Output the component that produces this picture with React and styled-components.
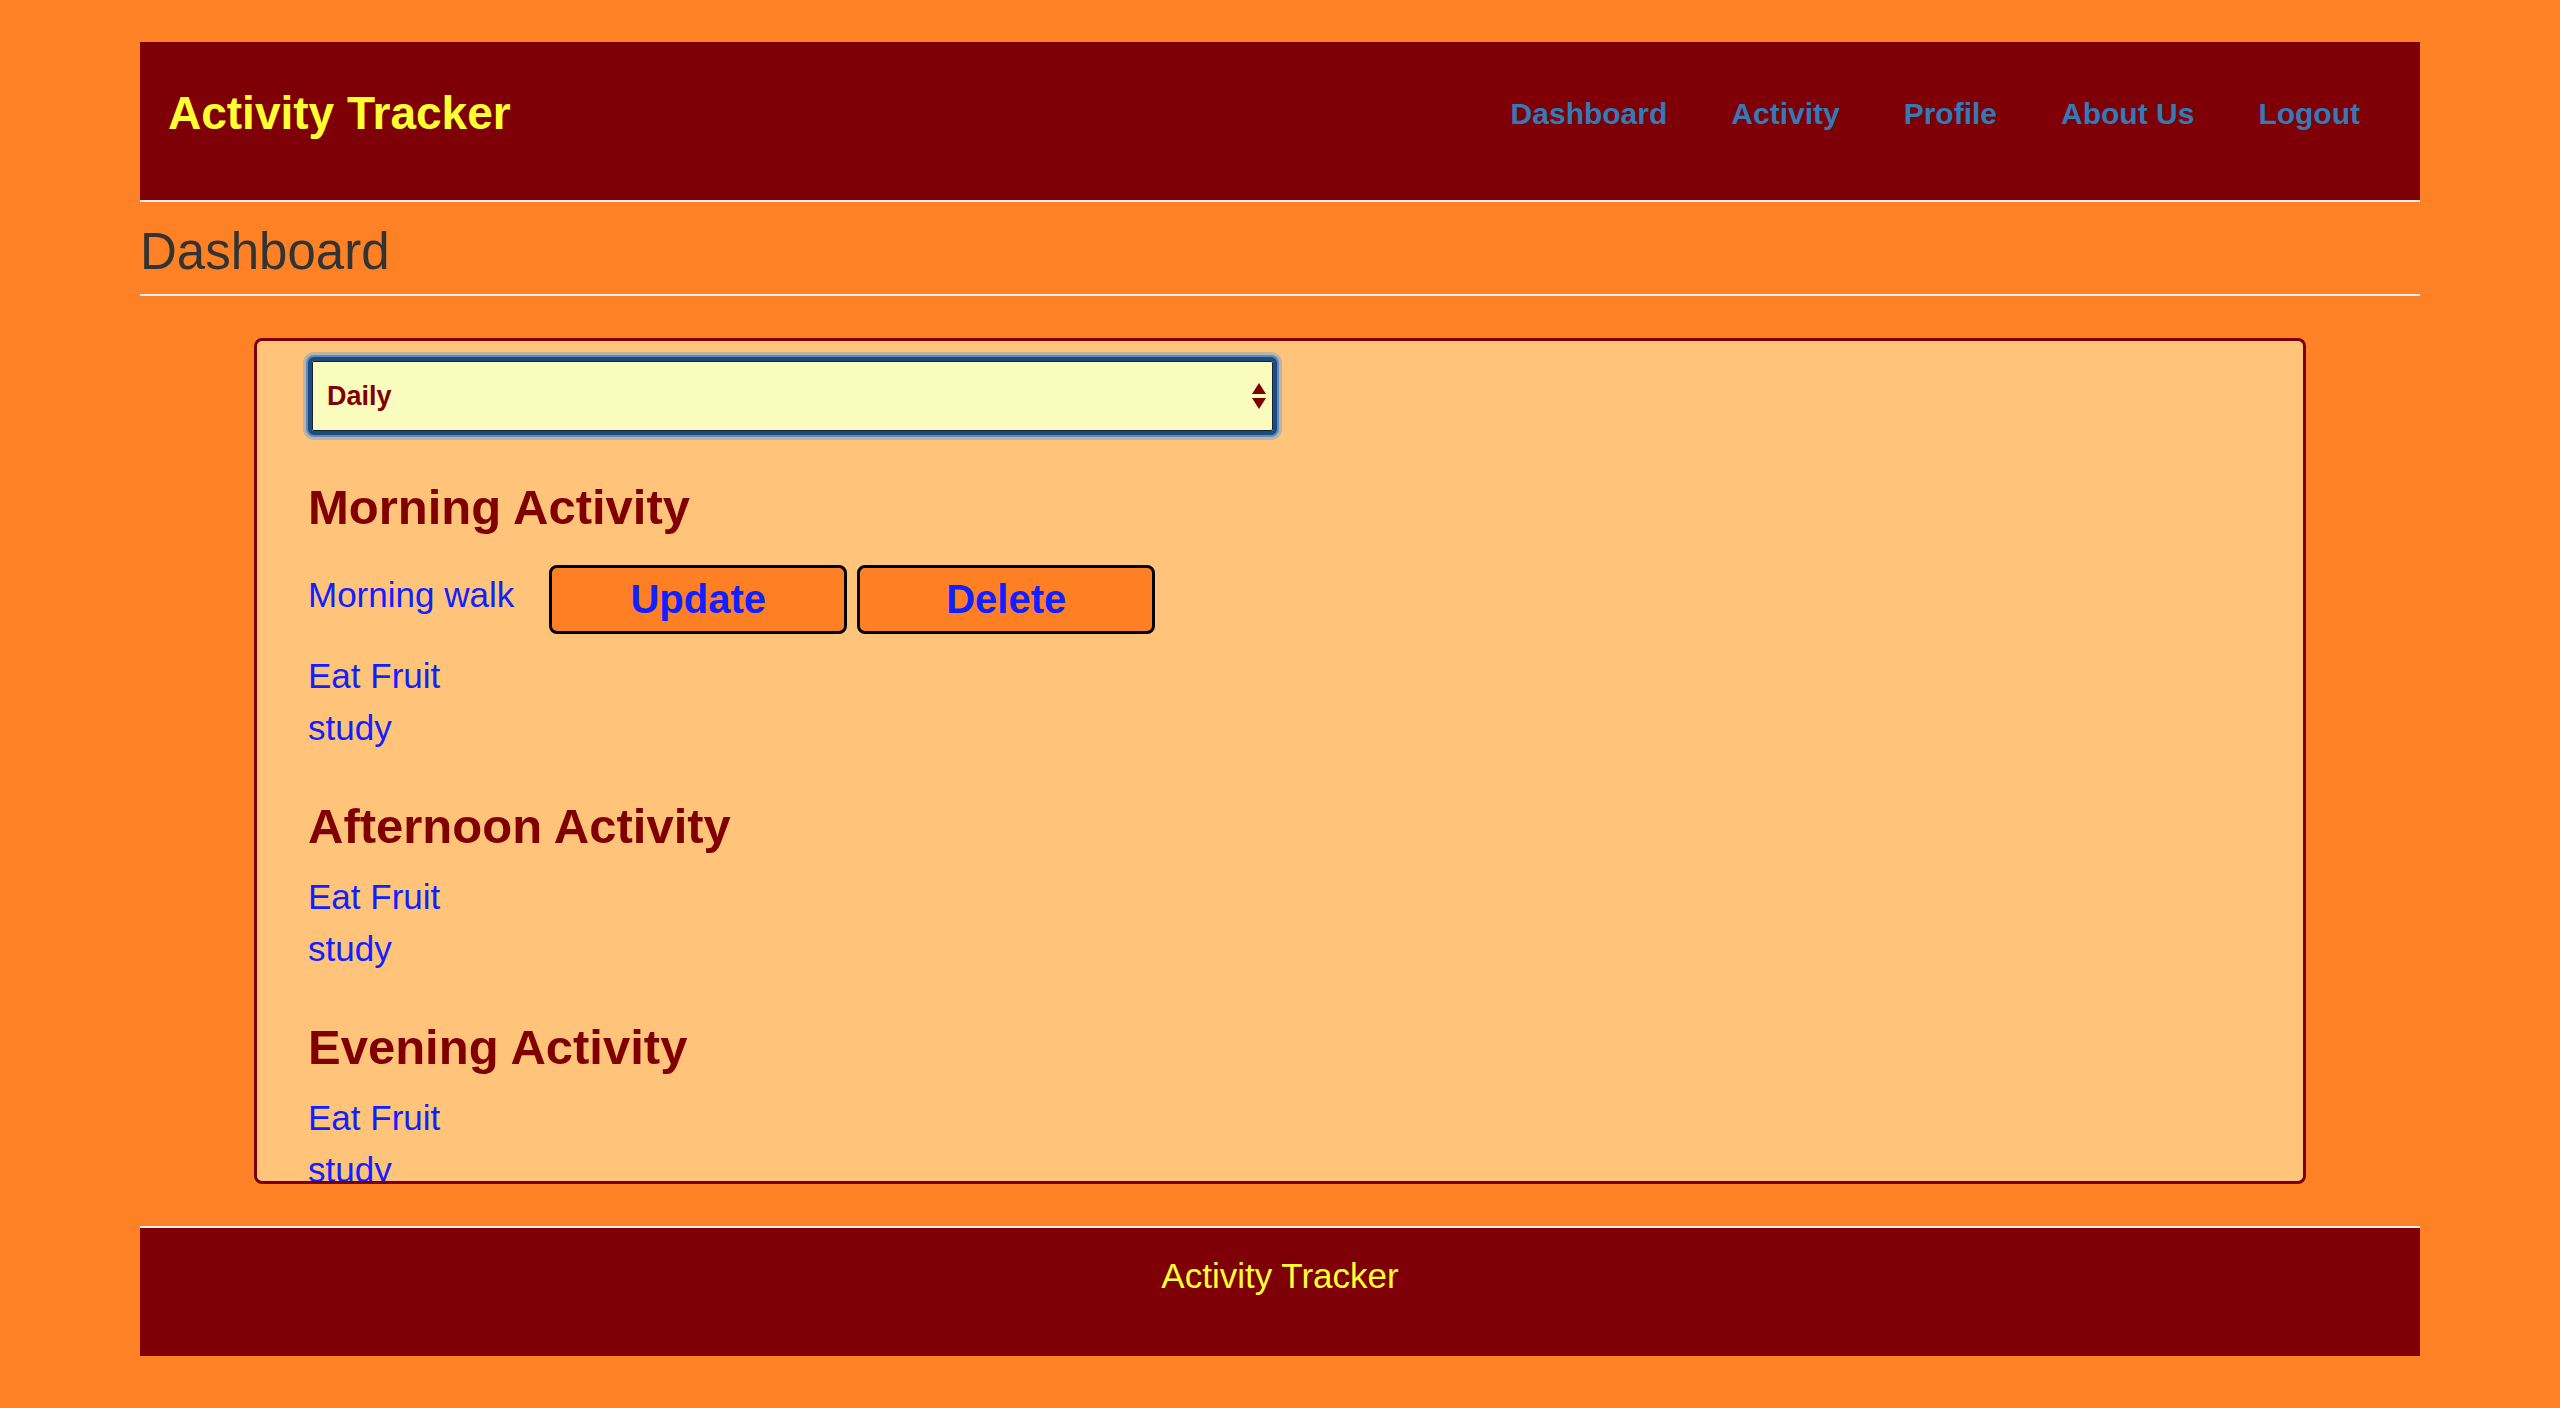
import React from "react";
import styled, { createGlobalStyle } from "styled-components";

const GlobalStyle = createGlobalStyle`
    body{
        margin:0;
        background:#ff8125;
        font-family:"Liberation Sans", Arial, Helvetica, sans-serif;
    }
`;

const Page = styled.div`
    padding:42px 140px 52px;
`;

const Header = styled.header`
    height:160px;
    box-sizing:border-box;
    background:#7e0006;
    border-bottom:2px solid #eee;
    padding:0 28px 16px 28px;
    display:flex;
    align-items:center;
    justify-content:space-between;
`;

const Brand = styled.h1`
    margin:0;
    font-size:46px;
    line-height:1.1;
    font-weight:700;
    color:#ffff33;
`;

const Nav = styled.nav`
    display:flex;
    gap:64px;
    padding-right:32px;

    a{
        font-size:30px;
        font-weight:700;
        line-height:1.1;
        color:#337ab7;
        text-decoration:none;
    }
`;

const PageTitle = styled.h1`
    margin:0;
    padding:22px 0 15px;
    font-size:51px;
    line-height:55px;
    font-weight:400;
    color:#333;
    border-bottom:2px solid #eee;
`;

const Card = styled.div`
    width:90%;
    height:846px;
    box-sizing:border-box;
    margin:42px auto 0;
    padding:16px 51px;
    background:#ffc47a;
    border:3px solid #7d0000;
    border-radius:8px;
    overflow:hidden;
`;

const SelectWrap = styled.div`
    position:relative;
    width:969px;
`;

const Select = styled.select`
    appearance:none;
    -webkit-appearance:none;
    width:100%;
    height:78px;
    box-sizing:border-box;
    padding:0 40px 0 15px;
    background:#fafcbd;
    border:4px solid #1f4b7c;
    border-radius:6px;
    box-shadow:inset 0 0 0 1px #15233a, 0 0 0 2px #5a8cc4, 0 0 0 5px rgba(110,160,215,0.45);
    font-family:inherit;
    font-size:27px;
    font-weight:700;
    color:#800000;
    outline:none;
`;

const Arrows = styled.svg`
    position:absolute;
    right:11px;
    top:50%;
    transform:translateY(-50%);
    pointer-events:none;
`;

const SectionTitle = styled.h2`
    margin:45px 0 18px;
    font-size:49px;
    line-height:54px;
    font-weight:700;
    color:#800000;
`;

const Item = styled.div`
    font-size:35px;
    line-height:52px;
    color:#1020ff;
`;

const ItemRow = styled.div`
    display:flex;
    align-items:flex-start;
    padding:13px 0 16px;

    ${Item}{
        padding-top:4px;
        margin-right:35px;
    }
`;

const ActionButton = styled.button`
    width:298px;
    height:69px;
    margin-right:${(p) => (p.$last ? "0" : "10px")};
    background:#ff7f24;
    border:3px solid #000;
    border-radius:8px;
    font-family:inherit;
    font-size:40px;
    font-weight:700;
    color:#1020ff;
    cursor:pointer;
`;

const Footer = styled.footer`
    height:130px;
    box-sizing:border-box;
    margin-top:42px;
    padding-top:22px;
    background:#7e0006;
    border-top:2px solid #eee;
    text-align:center;
    font-size:35px;
    line-height:52px;
    color:#ffff33;
`;

const sections = [
    { title: "Morning Activity", items: ["Morning walk", "Eat Fruit", "study"], editable: true },
    { title: "Afternoon Activity", items: ["Eat Fruit", "study"] },
    { title: "Evening Activity", items: ["Eat Fruit", "study"] },
];

const App = () => {
    return (
        <>
            <GlobalStyle />
            <Page>
                <Header>
                    <Brand>Activity Tracker</Brand>
                    <Nav>
                        <a href="#">Dashboard</a>
                        <a href="#">Activity</a>
                        <a href="#">Profile</a>
                        <a href="#">About Us</a>
                        <a href="#">Logout</a>
                    </Nav>
                </Header>

                <PageTitle>Dashboard</PageTitle>

                <Card>
                    <SelectWrap>
                        <Select defaultValue="daily">
                            <option value="daily">Daily</option>
                            <option value="weekly">Weekly</option>
                            <option value="monthly">Monthly</option>
                        </Select>
                        <Arrows width="14" height="26" viewBox="0 0 14 26">
                            <polygon points="7,0 14,11 0,11" fill="#800000" />
                            <polygon points="0,15 14,15 7,26" fill="#800000" />
                        </Arrows>
                    </SelectWrap>

                    {sections.map((s) => (
                        <div key={s.title}>
                            <SectionTitle>{s.title}</SectionTitle>
                            {s.items.map((item, i) =>
                                s.editable && i === 0 ? (
                                    <ItemRow key={item}>
                                        <Item>{item}</Item>
                                        <ActionButton>Update</ActionButton>
                                        <ActionButton $last>Delete</ActionButton>
                                    </ItemRow>
                                ) : (
                                    <Item key={item}>{item}</Item>
                                )
                            )}
                        </div>
                    ))}
                </Card>

                <Footer>Activity Tracker</Footer>
            </Page>
        </>
    );
};

export default App;
